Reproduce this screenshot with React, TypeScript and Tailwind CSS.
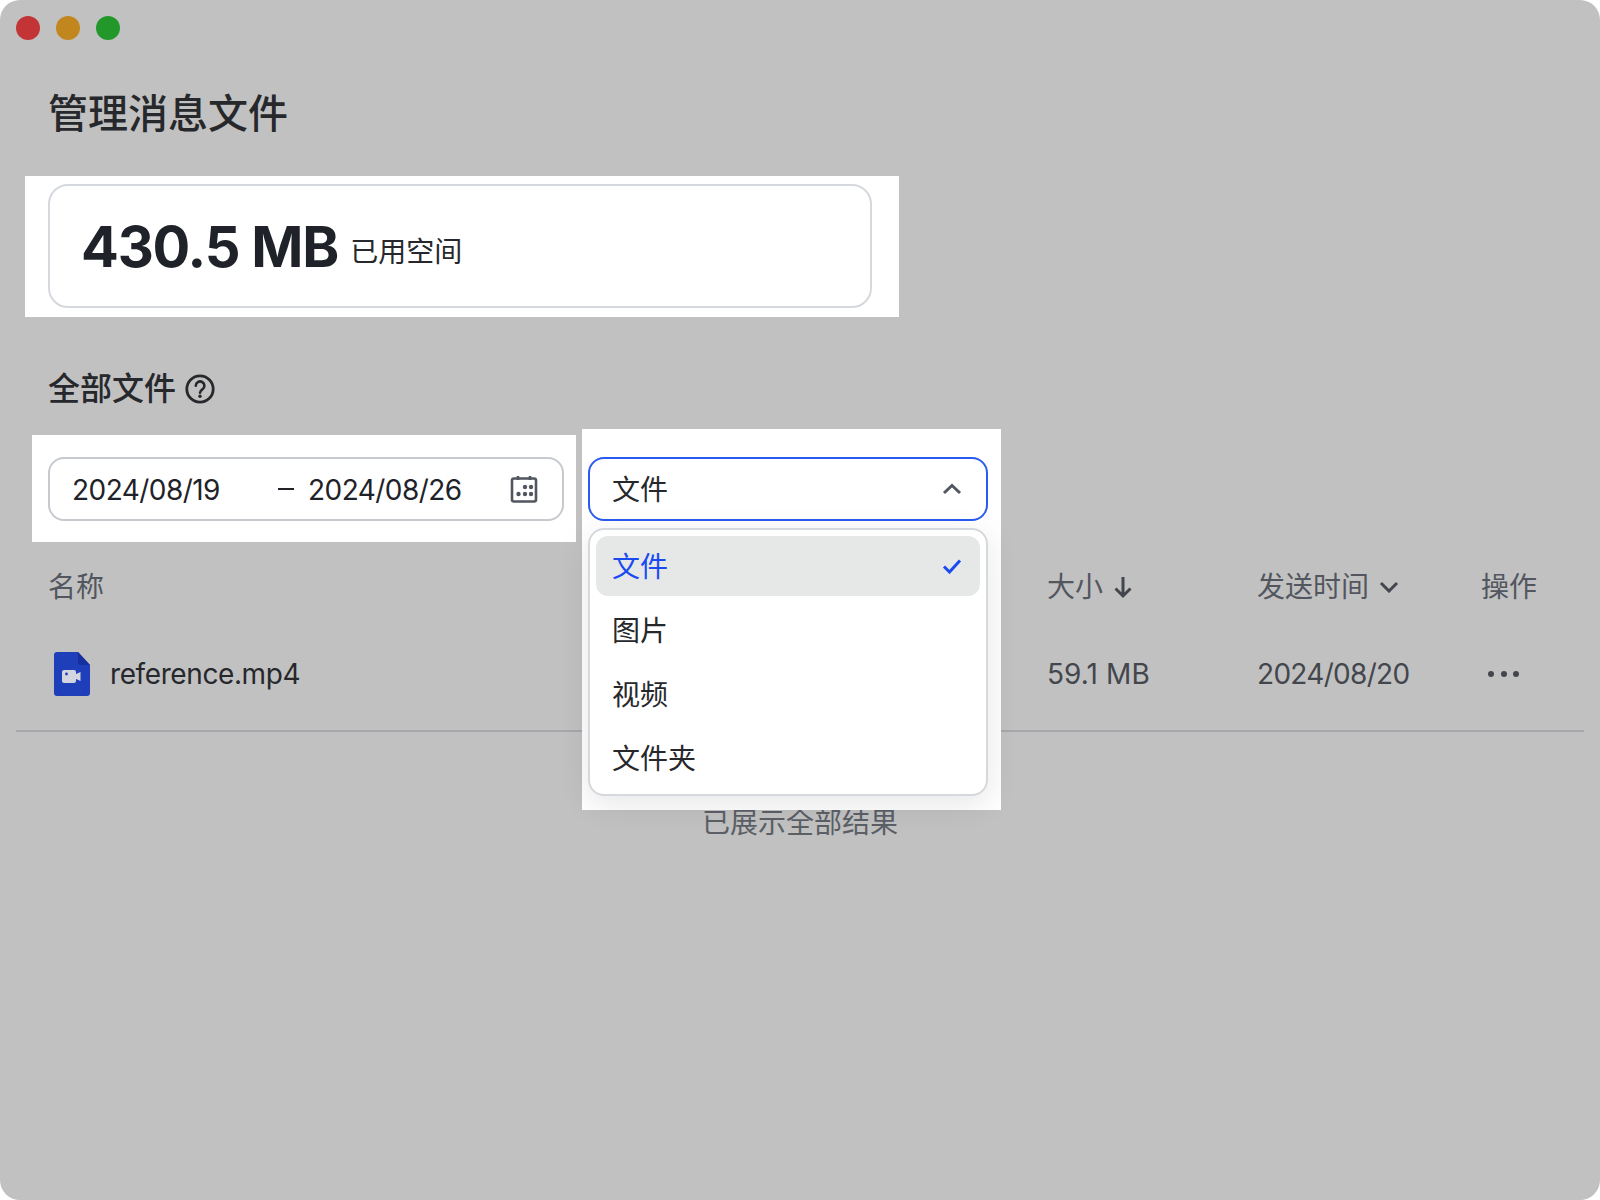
const cjk = "font-['Inter','Noto_Sans_CJK_SC',sans-serif]";

function FileIcon() {
  return (
    <svg width="36" height="44" viewBox="0 0 36 44" fill="none">
      <path d="M3 0H24L36 13V41a3 3 0 0 1-3 3H3a3 3 0 0 1-3-3V3a3 3 0 0 1 3-3Z" fill="#1f3fba" />
      <path d="M24 0L36 13H27a3 3 0 0 1-3-3Z" fill="#152f9c" />
      <rect x="8" y="18" width="14" height="13" rx="2" fill="#d3d6e0" />
      <path d="M21 22.5L26.5 20V29L21 26.5Z" fill="#d3d6e0" />
      <circle cx="12.5" cy="22" r="1.4" fill="#1f3fba" />
    </svg>
  );
}

function CalendarIcon() {
  return (
    <svg width="28" height="28" viewBox="0 0 28 28" fill="none">
      <rect x="2" y="3.5" width="24" height="23" rx="2" stroke="#52565e" strokeWidth="2.6" />
      <path d="M8 1V5M20 1V5" stroke="#52565e" strokeWidth="2.6" />
      <g fill="#52565e">
        <circle cx="15" cy="12" r="2.2" />
        <circle cx="21" cy="12" r="2.2" />
        <circle cx="8.5" cy="19" r="2.2" />
        <circle cx="15" cy="19" r="2.2" />
        <circle cx="21" cy="19" r="2.2" />
      </g>
    </svg>
  );
}

function HelpIcon() {
  return (
    <svg width="30" height="30" viewBox="0 0 30 30" fill="none">
      <circle cx="15" cy="15" r="13.2" stroke="#26282c" strokeWidth="2.8" />
      <path d="M10.8 11.8a4.3 4.3 0 1 1 6.6 3.6c-1.5 1-2.4 1.7-2.4 3.4" stroke="#26282c" strokeWidth="2.6" strokeLinecap="round" />
      <circle cx="15" cy="22.2" r="1.7" fill="#26282c" />
    </svg>
  );
}

const options = ["图片", "视频", "文件夹"];

export default function App() {
  return (
    <div className={`w-[1600px] h-[1200px] bg-white ${cjk}`}>
      <div className="h-full rounded-[20px] bg-[#c1c1c1] overflow-hidden flex flex-col">
        <div className="h-[56px] flex items-center gap-4 pl-4 shrink-0">
          <span className="w-6 h-6 rounded-full bg-[#c33436]" />
          <span className="w-6 h-6 rounded-full bg-[#c2861e]" />
          <span className="w-6 h-6 rounded-full bg-[#23982a]" />
        </div>

        <h1 className="mt-[28px] ml-[48px] h-[60px] text-[40px] leading-[60px] font-medium text-[#26282c]">管理消息文件</h1>

        <div className="mt-[32px] ml-[25px] w-[874px] h-[141px] bg-white pl-[23px] pr-[27px] pt-2 pb-[9px] shrink-0">
          <div className="h-full rounded-[20px] border-2 border-[#d5d9de] flex items-center pl-[31px] gap-[12px]">
            <span className="text-[56px] leading-none font-bold text-[#1f2329] tracking-[-1.2px] mt-[2px]">430.5 MB</span>
            <span className="text-[28px] leading-none text-[#26282c] mt-[12px]">已用空间</span>
          </div>
        </div>

        <div className="mt-[48px] ml-[48px] h-[48px] flex items-center gap-[9px] shrink-0">
          <span className="text-[32px] leading-[48px] font-medium text-[#26282c]">全部文件</span>
          <HelpIcon />
        </div>

        <div className="relative mt-[22px] h-[107px] shrink-0">
          <div className="ml-[32px] w-[544px] h-full bg-white pl-4 pr-3 pt-[22px]">
            <div className="h-[64px] rounded-[16px] border-2 border-[#c6c9ce] flex items-center pl-[22px] pr-[24px] text-[28px] tracking-[-0.55px] text-[#1f2329]">
              <span className="w-[205px] pt-[1px]">2024/08/19</span>
              <span className="w-[31px] h-[2px] pl-[1px] pr-[14px]"><span className="block h-full w-4 bg-[#1f2329]" /></span>
              <span className="pt-[1px]">2024/08/26</span>
              <span className="ml-auto"><CalendarIcon /></span>
            </div>
          </div>

          <div className="absolute left-[582px] top-[-6px] z-10 w-[419px] h-[381px] bg-white pl-[6px] pr-[13px] pt-[28px]">
            <div className="h-[64px] rounded-[16px] border-2 border-[#2a5bf0] flex items-center justify-between pl-[22px] pr-[24px] text-[28px] text-[#26282c]">
              <span className="pt-[2px]">文件</span>
              <svg width="20" height="12" viewBox="0 0 20 12" fill="none">
                <path d="M2 10L10 2.5L18 10" stroke="#52565e" strokeWidth="3" />
              </svg>
            </div>
            <div className="mt-[7px] h-[268px] rounded-[16px] border-2 border-[#d5d8dc] bg-white p-[6px] flex flex-col gap-1 shadow-[0_8px_32px_rgba(0,0,0,0.1)]">
              <div className="h-[60px] shrink-0 rounded-[12px] bg-[#e6e8e8] flex items-center justify-between pl-[16px] pr-[18px] text-[28px] text-[#1a4bf0]">
                <span className="pt-[2px]">文件</span>
                <svg width="20" height="16" viewBox="0 0 20 16" fill="none">
                  <path d="M2 8.5L7.5 14L18 2.5" stroke="#1a4bf0" strokeWidth="3" />
                </svg>
              </div>
              {options.map((o) => (
                <div key={o} className="h-[60px] shrink-0 flex items-center pl-[16px] pt-[2px] text-[28px] text-[#26282c]">{o}</div>
              ))}
            </div>
          </div>
        </div>

        <div className="mt-[21px] h-[48px] shrink-0 grid grid-cols-[999px_210px_224px_1fr] pl-[48px] items-center text-[28px] text-[#52565e]">
          <span>名称</span>
          <span className="flex items-center gap-[10px]">
            大小
            <svg width="20" height="24" viewBox="0 0 20 24" fill="none">
              <path d="M10 2V21M2.5 13.5L10 21L17.5 13.5" stroke="#43464d" strokeWidth="3" />
            </svg>
          </span>
          <span className="flex items-center gap-[10px]">
            发送时间
            <svg width="20" height="12" viewBox="0 0 20 12" fill="none">
              <path d="M2 2L10 10L18 2" stroke="#43464d" strokeWidth="3" />
            </svg>
          </span>
          <span>操作</span>
        </div>

        <div className="mx-4 h-[121px] shrink-0 border-b-2 border-[#a8a8ac] grid grid-cols-[998px_210px_224px_1fr] items-center pt-[7px] pl-[33px] text-[28px]">
          <span className="flex items-center gap-[20px] pl-[5px] text-[#26282c] tracking-[-0.4px]">
            <FileIcon />
            <span>reference.mp4</span>
          </span>
          <span className="text-[#43464d] tracking-[0.1px]">59.1 MB</span>
          <span className="text-[#43464d] tracking-[-0.7px]">2024/08/20</span>
          <span className="flex gap-[6.5px] pl-[7px]">
            <span className="w-[6px] h-[6px] rounded-full bg-[#43464d]" />
            <span className="w-[6px] h-[6px] rounded-full bg-[#43464d]" />
            <span className="w-[6px] h-[6px] rounded-full bg-[#43464d]" />
          </span>
        </div>

        <p className="mt-[70px] text-center text-[28px] leading-[42px] text-[#5b5f66]">已展示全部结果</p>
      </div>
    </div>
  );
}
